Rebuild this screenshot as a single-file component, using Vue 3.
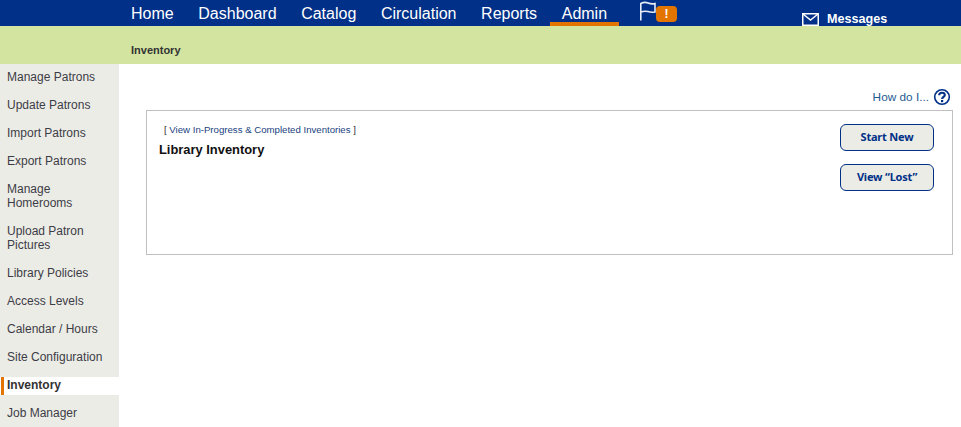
<template>
  <div class="page">
    <header class="topbar">
      <nav class="mainnav">
        <a v-for="item in navItems" :key="item" class="navlink" :class="{ active: item === 'Admin' }">{{ item }}</a>
      </nav>
      <div class="alerts">
        <svg class="flag" width="18" height="20" viewBox="0 0 18 20" fill="none" stroke="#e8ecf6" stroke-width="1.6">
          <path d="M1.8 19.5V2.4C4.5 1.2 7 1.2 9 2C11 2.8 13.5 3.1 16 2.6V11C13.5 11.4 11 11.2 9 10.6C7 10 4.5 10 1.8 11" />
        </svg>
        <span class="badge">!</span>
      </div>
      <div class="messages">
        <svg width="17" height="13" viewBox="0 0 17 13" fill="none" stroke="#fff" stroke-width="1.5">
          <rect x="0.75" y="0.75" width="15.5" height="11.5" />
          <path d="M1 1L8.5 7L16 1" />
        </svg>
        <span>Messages</span>
      </div>
    </header>
    <div class="subbar"><span>Inventory</span></div>
    <div class="body">
      <aside class="sidebar">
        <a v-for="item in sideItems" :key="item" class="sidelink" :class="{ current: item === 'Inventory' }">{{ item }}</a>
      </aside>
      <main class="content">
        <div class="help">
          <a>How do I...</a>
          <svg width="18" height="18" viewBox="0 0 18 18">
            <circle cx="9" cy="9" r="7.3" fill="#fff" stroke="#003087" stroke-width="1.6" />
            <path d="M6.2 7.2C6.2 5.5 7.4 4.7 9 4.7C10.6 4.7 11.8 5.6 11.8 7C11.8 8.9 9.1 9 9.1 11" fill="none" stroke="#003087" stroke-width="2.1" />
            <rect x="8" y="12" width="2.2" height="2.2" fill="#003087" />
          </svg>
        </div>
        <section class="panel">
          <div class="panel-main">
            <p class="panel-link">[ <a>View In-Progress &amp; Completed Inventories</a> ]</p>
            <h1>Library Inventory</h1>
          </div>
          <div class="panel-actions">
            <button>Start New</button>
            <button>View “Lost”</button>
          </div>
        </section>
      </main>
    </div>
  </div>
</template>

<script setup>
const navItems = ['Home', 'Dashboard', 'Catalog', 'Circulation', 'Reports', 'Admin']
const sideItems = [
  'Manage Patrons',
  'Update Patrons',
  'Import Patrons',
  'Export Patrons',
  'Manage Homerooms',
  'Upload Patron Pictures',
  'Library Policies',
  'Access Levels',
  'Calendar / Hours',
  'Site Configuration',
  'Inventory',
  'Job Manager',
]
</script>

<style>
html, body {
  margin: 0;
  background: #fff;
  overflow: hidden;
}
</style>

<style scoped>
.page {
  height: 427px;
  overflow: hidden;
  font-family: "Liberation Sans", Arial, sans-serif;
  color: #333;
}

.topbar {
  height: 26px;
  background: #003087;
  display: flex;
  overflow: hidden;
  color: #fff;
}

.mainnav {
  display: flex;
  gap: 0.6px;
  padding-left: 119px;
}

.navlink {
  height: 26px;
  box-sizing: border-box;
  padding: 5px 12px 0;
  font-size: 16px;
  line-height: 18px;
}

.navlink.active {
  border-bottom: 4px solid #e37400;
}

.alerts {
  display: flex;
  align-items: flex-start;
  margin-left: 20px;
  padding-top: 1px;
}

.badge {
  margin: 5px 0 0 -1px;
  width: 21px;
  height: 16px;
  border-radius: 4px;
  background: #e37400;
  font-size: 12px;
  font-weight: bold;
  line-height: 16px;
  text-align: center;
}

.messages {
  display: flex;
  gap: 8px;
  margin-left: 125px;
  padding-top: 13px;
  font-size: 12.6px;
  font-weight: bold;
  line-height: 13px;
}

.messages svg {
  flex: none;
}

.subbar {
  height: 38px;
  box-sizing: border-box;
  padding: 17px 0 0 131px;
  background: #d2e4a0;
  font-size: 11px;
  font-weight: bold;
  line-height: 14px;
}

.body {
  display: flex;
}

.sidebar {
  width: 119px;
  height: 363px;
  flex: none;
  background: #ecece6;
  overflow: hidden;
}

.sidelink {
  display: block;
  padding: 6px 7px 8px;
  font-size: 12px;
  line-height: 14px;
  color: #3c3c46;
}

.sidelink.current {
  margin: 5px 0;
  padding: 1px 7px 3px;
  background: linear-gradient(to right, #fff 1px, #e37400 1px, #e37400 4px, #fff 4px);
  font-weight: bold;
  color: #333;
}

.content {
  flex: 1;
  padding: 24px 8px 0 27px;
}

.help {
  display: flex;
  justify-content: flex-end;
  align-items: center;
  gap: 4px;
  height: 18px;
  padding-right: 2px;
  font-size: 11.8px;
  color: #1c5a92;
}

.panel {
  display: flex;
  justify-content: space-between;
  box-sizing: border-box;
  height: 145px;
  margin-top: 4px;
  padding: 13px 18px 0 12px;
  border: 1px solid #c0c0c0;
}

.panel-link {
  margin: 0 0 0 5px;
  font-size: 9.65px;
  line-height: 12px;
  color: #333;
}

.panel-link a {
  color: #1a3f80;
}

h1 {
  margin: 6px 0 0;
  font-size: 12.9px;
  line-height: 15px;
  color: #111;
}

.panel-actions {
  display: flex;
  flex-direction: column;
  gap: 13px;
}

button {
  width: 94px;
  height: 27px;
  padding: 0 0 2px;
  border: 1px solid #003087;
  border-radius: 6px;
  background: #ecece6;
  color: #003087;
  font-family: "Noto Sans", sans-serif;
  font-size: 11px;
  font-weight: bold;
  letter-spacing: -0.2px;
}
</style>
